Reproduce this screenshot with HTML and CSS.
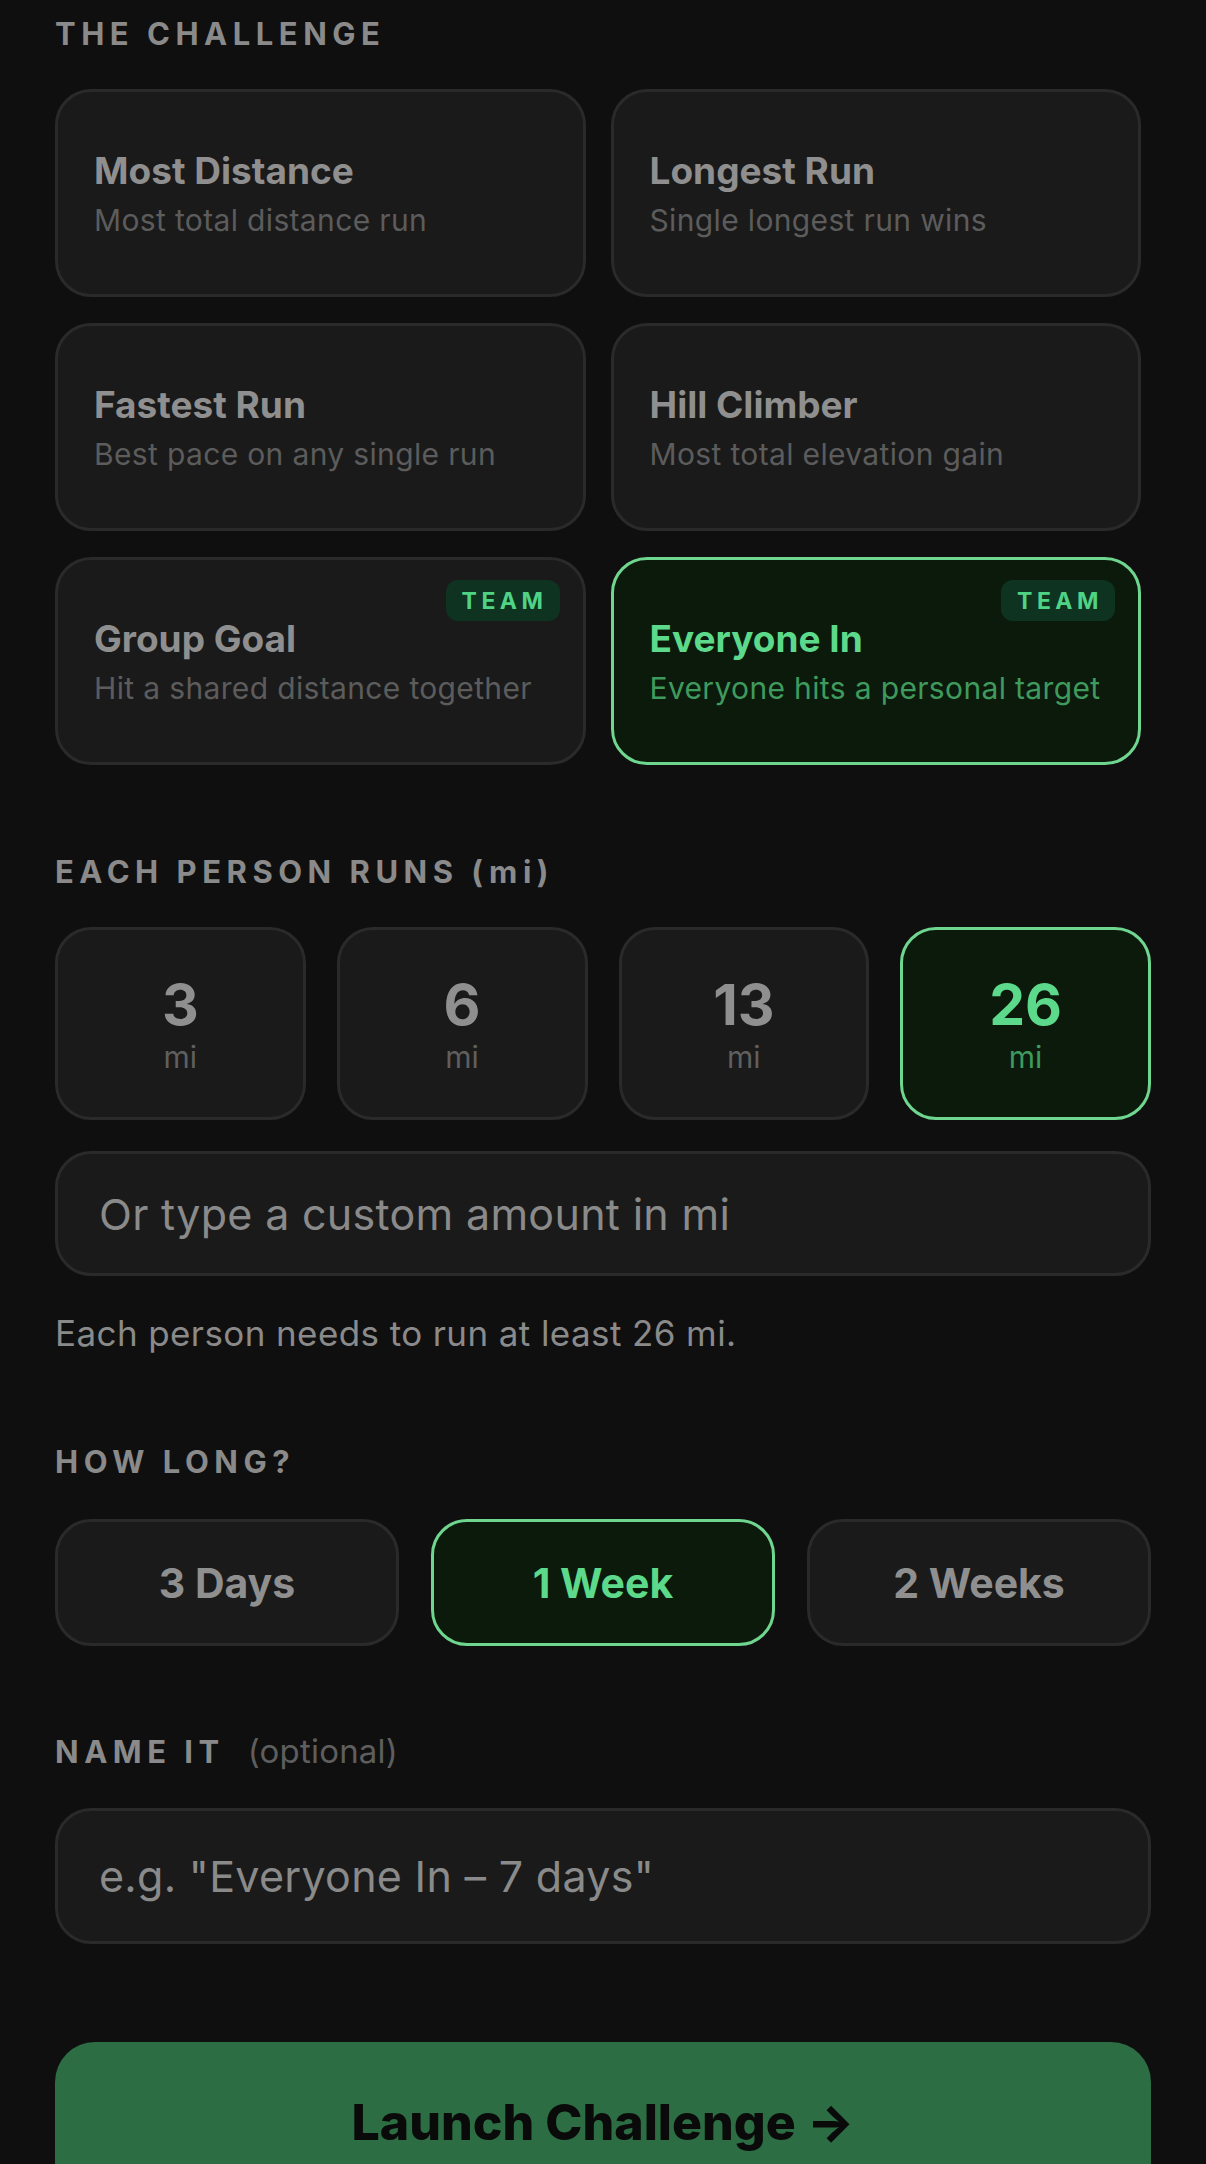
FILE: index.html
```html
<!DOCTYPE html>
<html lang="en">
<head>
<meta charset="utf-8">
<title>New Challenge</title>
<link rel="stylesheet" href="styles.css">
</head>
<body>
<main class="page">
  <h2 class="label">THE CHALLENGE</h2>
  <div class="type-grid">
    <div class="type-card">
      <div class="type-title">Most Distance</div>
      <div class="type-sub">Most total distance run</div>
    </div>
    <div class="type-card">
      <div class="type-title">Longest Run</div>
      <div class="type-sub">Single longest run wins</div>
    </div>
    <div class="type-card">
      <div class="type-title">Fastest Run</div>
      <div class="type-sub">Best pace on any single run</div>
    </div>
    <div class="type-card">
      <div class="type-title">Hill Climber</div>
      <div class="type-sub">Most total elevation gain</div>
    </div>
    <div class="type-card">
      <span class="badge">TEAM</span>
      <div class="type-title">Group Goal</div>
      <div class="type-sub">Hit a shared distance together</div>
    </div>
    <div class="type-card is-active">
      <span class="badge">TEAM</span>
      <div class="type-title">Everyone In</div>
      <div class="type-sub">Everyone hits a personal target</div>
    </div>
  </div>

  <h2 class="label label-gap">EACH PERSON RUNS (mi)</h2>
  <div class="dist-row">
    <div class="dist-btn"><span class="dist-num">3</span><span class="dist-unit">mi</span></div>
    <div class="dist-btn"><span class="dist-num">6</span><span class="dist-unit">mi</span></div>
    <div class="dist-btn"><span class="dist-num">13</span><span class="dist-unit">mi</span></div>
    <div class="dist-btn is-active"><span class="dist-num">26</span><span class="dist-unit">mi</span></div>
  </div>
  <input class="field field-custom" type="text" placeholder="Or type a custom amount in mi">
  <p class="helper">Each person needs to run at least 26 mi.</p>

  <h2 class="label label-gap2">HOW LONG?</h2>
  <div class="dur-row">
    <div class="dur-btn">3 Days</div>
    <div class="dur-btn is-active">1 Week</div>
    <div class="dur-btn">2 Weeks</div>
  </div>

  <h2 class="label label-gap3">NAME IT <span class="optional">(optional)</span></h2>
  <input class="field field-name" type="text" placeholder="e.g. &quot;Everyone In – 7 days&quot;">

  <button class="launch" type="button">Launch Challenge →</button>
</main>
</body>
</html>
```

FILE: styles.css
```css
* { box-sizing: border-box; }

html, body {
  margin: 0;
  padding: 0;
  background: #0f0f0f;
}

body {
  font-family: Inter, Roboto, "Liberation Sans", Arial, sans-serif;
  color: #8f8f8f;
  height: 2164px;
  overflow: hidden;
}

.page {
  display: block;
  padding: 16px 55px 0;
}

.label {
  margin: 0;
  font-size: 31px;
  line-height: 36px;
  font-weight: 700;
  letter-spacing: 5.5px;
  color: #8a8a8a;
}

.label-gap { margin-top: 89px; }
.label-gap2 { margin-top: 90px; }
.label-gap3 { margin-top: 87px; display: flex; align-items: baseline; }

.optional {
  font-size: 33px;
  font-weight: 400;
  letter-spacing: 0.2px;
  color: #5e5e5e;
  margin-left: 23px;
}

/* challenge type cards */
.type-grid {
  margin-top: 37px;
  margin-right: 10px;
  display: grid;
  grid-template-columns: 1fr 1fr;
  gap: 26px 25px;
}

.type-card {
  position: relative;
  height: 208px;
  background: #1a1a1a;
  border: 3px solid #2a2a2a;
  border-radius: 36px;
  padding: 0 36px;
  display: flex;
  flex-direction: column;
  justify-content: center;
}

.type-title {
  font-size: 37px;
  line-height: 46px;
  font-weight: 700;
  color: #8f8f8f;
}

.type-sub {
  margin-top: 7px;
  font-size: 30px;
  line-height: 38px;
  letter-spacing: 0.35px;
  color: #5c5c5c;
}

.type-card.is-active {
  background: #0c1a0c;
  border-color: #6fd68f;
}
.type-card.is-active .type-title { color: #5cd98a; }
.type-card.is-active .type-sub { color: #3f9a5d; }

.badge {
  position: absolute;
  top: 20px;
  right: 23px;
  width: 114px;
  height: 41px;
  border-radius: 12px;
  background: #0f3321;
  color: #4fd486;
  font-size: 23px;
  font-weight: 700;
  letter-spacing: 4.5px;
  padding-left: 4px;
  display: flex;
  align-items: center;
  justify-content: center;
}

/* distance buttons */
.dist-row {
  margin-top: 37px;
  display: grid;
  grid-template-columns: repeat(4, 1fr);
  gap: 31px;
}

.dist-btn {
  height: 193px;
  background: #1a1a1a;
  border: 3px solid #2a2a2a;
  border-radius: 36px;
  display: flex;
  flex-direction: column;
  align-items: center;
  justify-content: center;
  padding-top: 2px;
}

.dist-num {
  font-size: 57px;
  line-height: 60px;
  font-weight: 700;
  color: #8f8f8f;
}

.dist-unit {
  margin-top: 4px;
  font-size: 30px;
  line-height: 36px;
  color: #5f5f5f;
}

.dist-btn.is-active {
  background: #0c1a0c;
  border-color: #6fd68f;
}
.dist-btn.is-active .dist-num { color: #5cd98a; }
.dist-btn.is-active .dist-unit { color: #3f9a5d; }

/* inputs */
.field {
  display: block;
  width: 100%;
  background: #1a1a1a;
  border: 3px solid #2a2a2a;
  border-radius: 36px;
  padding: 0 41px;
  font-family: Inter, Roboto, "Liberation Sans", Arial, sans-serif;
  font-size: 43px;
  letter-spacing: 0.3px;
  color: #cfcfcf;
  outline: none;
}
.field::placeholder { color: #8a8a8a; }

.field-custom {
  margin-top: 31px;
  height: 125px;
}

.field-name {
  margin-top: 38px;
  height: 136px;
}

.helper {
  margin: 36px 0 0;
  font-size: 35px;
  line-height: 42px;
  letter-spacing: 0.4px;
  color: #8a8a8a;
}

/* duration */
.dur-row {
  margin-top: 39px;
  display: grid;
  grid-template-columns: repeat(3, 1fr);
  gap: 32px;
}

.dur-btn {
  height: 127px;
  background: #1a1a1a;
  border: 3px solid #2a2a2a;
  border-radius: 36px;
  display: flex;
  align-items: center;
  justify-content: center;
  font-size: 41px;
  font-weight: 700;
  color: #8f8f8f;
}

.dur-btn.is-active {
  background: #0c1a0c;
  border-color: #6fd68f;
  color: #5cd98a;
}

/* launch */
.launch {
  display: block;
  margin-top: 98px;
  width: 100%;
  height: 160px;
  border: none;
  border-radius: 40px;
  background: #2c6d44;
  color: #0a0a0a;
  font-family: Inter, Roboto, "Liberation Sans", sans-serif;
  font-size: 50px;
  font-weight: 800;
  padding-bottom: 2px;
}
```
